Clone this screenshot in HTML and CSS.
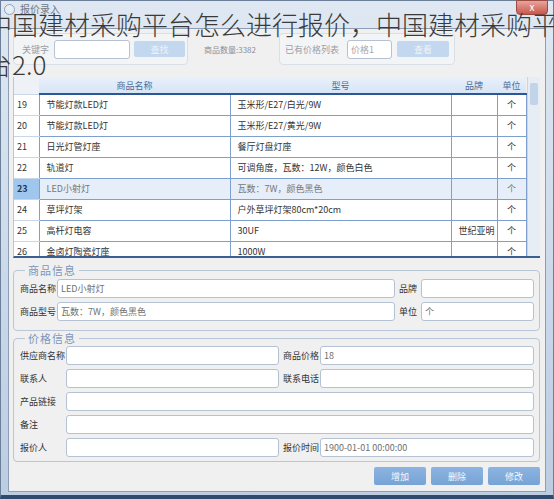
FILE: index.html
```html
<!DOCTYPE html>
<html lang="zh-CN">
<head>
  <meta charset="UTF-8" />
  <meta name="viewport" content="width=device-width, initial-scale=1.0"/>
  <title>中国建材采购平台怎么进行报价</title>
  <link rel="stylesheet" href="styles.css">
</head>
<body>
  <div class="window">
    <div class="titlebar">
      <span class="app-icon"></span>
      <span class="title">报价录入</span>
      <span class="close-btn">x</span>
    </div>

    <div class="client">
      <div class="toolbar">
        <div class="tool-box search-box">
          <span class="tool-label">关键字</span>
          <input type="text" class="field kw-input" />
          <button class="flat-btn find-btn">查找</button>
        </div>
        <span class="count">商品数量:3382</span>
        <div class="tool-box price-box">
          <span class="tool-label">已有价格列表</span>
          <input type="text" class="field price-input" placeholder="价格1" />
          <button class="flat-btn view-btn">查看</button>
        </div>
      </div>

      <div class="grid-wrap">
        <table class="grid">
          <thead>
            <tr>
              <th class="rh"></th>
              <th class="c-name">商品名称</th>
              <th class="c-model">型号</th>
              <th class="c-brand">品牌</th>
              <th class="c-unit">单位</th>
            </tr>
          </thead>
          <tbody>
            <tr><td class="rh">19</td><td>节能灯款LED灯</td><td>玉米形/E27/白光/9W</td><td></td><td class="u">个</td></tr>
            <tr><td class="rh">20</td><td>节能灯款LED灯</td><td>玉米形/E27/黄光/9W</td><td></td><td class="u">个</td></tr>
            <tr><td class="rh">21</td><td>日光灯管灯座</td><td>餐厅灯盘灯座</td><td></td><td class="u">个</td></tr>
            <tr><td class="rh">22</td><td>轨道灯</td><td>可调角度，瓦数：12W，颜色白色</td><td></td><td class="u">个</td></tr>
            <tr class="selected"><td class="rh">23</td><td>LED小射灯</td><td>瓦数：7W，颜色黑色</td><td></td><td class="u">个</td></tr>
            <tr><td class="rh">24</td><td>草坪灯架</td><td>户外草坪灯架80cm*20cm</td><td></td><td class="u">个</td></tr>
            <tr><td class="rh">25</td><td>高杆灯电容</td><td>30UF</td><td>世纪亚明</td><td class="u">个</td></tr>
            <tr><td class="rh">26</td><td>金卤灯陶瓷灯座</td><td>1000W</td><td></td><td class="u">个</td></tr>
          </tbody>
        </table>
        <div class="scrollbar"><div class="thumb"></div></div>
      </div>

      <fieldset class="group goods-group">
        <legend>商品信息</legend>
        <label class="lbl">商品名称</label>
        <input type="text" class="field" value="LED小射灯" />
        <label class="lbl lbl-r">品牌</label>
        <input type="text" class="field" />
        <label class="lbl">商品型号</label>
        <input type="text" class="field" value="瓦数：7W，颜色黑色" />
        <label class="lbl lbl-r">单位</label>
        <input type="text" class="field" value="个" />
      </fieldset>

      <fieldset class="group price-group">
        <legend>价格信息</legend>
        <label class="lbl">供应商名称</label>
        <input type="text" class="field" />
        <label class="lbl lbl-r">商品价格</label>
        <input type="text" class="field" value="18" />
        <label class="lbl">联系人</label>
        <input type="text" class="field" />
        <label class="lbl lbl-r">联系电话</label>
        <input type="text" class="field" />
        <label class="lbl">产品链接</label>
        <input type="text" class="field wide" />
        <label class="lbl">备注</label>
        <input type="text" class="field wide" />
        <label class="lbl">报价人</label>
        <input type="text" class="field" />
        <label class="lbl lbl-r">报价时间</label>
        <input type="text" class="field" value="1900-01-01 00:00:00" />
      </fieldset>

      <div class="actions">
        <button class="act-btn">增加</button>
        <button class="act-btn">删除</button>
        <button class="act-btn">修改</button>
      </div>
    </div>
  </div>

  <h1 class="headline">中国建材采购平台怎么进行报价，中国建材采购平台2.0</h1>
</body>
</html>
```

FILE: styles.css
```css
* {
  box-sizing: border-box;
}

body {
  margin: 0;
  width: 554px;
  height: 499px;
  overflow: hidden;
  position: relative;
  font-family: "Noto Sans CJK SC", "Liberation Sans", sans-serif;
  background: #fff;
}

/* overlaid page heading */
.headline {
  position: absolute;
  left: -14px;
  top: 4px;
  width: 584px;
  margin: 0;
  font-size: 26px;
  line-height: 40px;
  font-weight: 300;
  color: #3a3a3a;
}

.window {
  width: 554px;
  height: 499px;
  display: flex;
  flex-direction: column;
  background: linear-gradient(to bottom, #dfe8f2, #c9d8ea 60%, #bccde2);
  border: 1px solid #6b7f99;
  border-bottom: 4px solid #2f4a6e;
  padding: 0 7px 3px 7px;
}

.titlebar {
  height: 27px;
  display: flex;
  align-items: flex-start;
  padding-top: 2px;
  font-size: 10px;
  color: #6b7888;
}

.app-icon {
  width: 11px;
  height: 11px;
  margin: 1px 5px 0 -4px;
  border-radius: 50%;
  border: 1px solid #8fa3bb;
  background: #e9eef4;
}

.title {
  line-height: 12px;
}

.close-btn {
  margin-left: auto;
  margin-right: -2px;
  margin-top: -3px;
  width: 32px;
  height: 15px;
  border-radius: 0 0 4px 4px;
  background: linear-gradient(to bottom, #e7a59c, #c8584b);
  border: 1px solid #9b4a44;
  color: #fff;
  font-size: 10px;
  line-height: 11px;
  text-align: center;
}

.client {
  flex: 1;
  background: #f0f0f0;
  border: 1px solid #8d9db3;
  padding: 4px 5px 0 4px;
  display: flex;
  flex-direction: column;
}

/* top bar */
.toolbar {
  height: 32px;
  display: flex;
  align-items: center;
}

.tool-box {
  flex-shrink: 0;
  height: 32px;
  display: flex;
  align-items: center;
  border: 1px solid #d9dfe6;
  border-radius: 4px;
  background: #f3f4f6;
}

.search-box {
  width: 175px;
  padding-left: 8px;
}

.price-box {
  width: 176px;
  margin-left: auto;
  margin-right: 85px;
  padding-left: 5px;
}

.tool-label {
  font-size: 9px;
  color: #9a9fa6;
  white-space: nowrap;
  flex-shrink: 0;
}

.count {
  margin-left: 16px;
  font-size: 8px;
  color: #8a8f96;
  white-space: nowrap;
}

.field {
  min-width: 0;
  height: 19px;
  border: 1px solid #b4c2d4;
  border-radius: 3px;
  background: #fff;
  font-family: "Noto Sans CJK SC", sans-serif;
  font-size: 9px;
  color: #707070;
  padding: 0 3px;
  outline: none;
}

.field::placeholder {
  color: #a5a5a5;
}

.kw-input {
  flex-shrink: 0;
  width: 76px;
  margin-left: 5px;
}

.price-input {
  flex-shrink: 0;
  width: 45px;
  margin-left: 8px;
}

.flat-btn {
  flex-shrink: 0;
  height: 16px;
  width: 51px;
  margin-left: 4px;
  border: none;
  border-radius: 2px;
  background: #c3d7ee;
  color: #eef4fb;
  font-family: "Noto Sans CJK SC", sans-serif;
  font-size: 9px;
  padding: 0;
}

.view-btn {
  width: 52px;
  margin-left: 5px;
}

/* data grid */
.grid-wrap {
  margin-top: 12px;
  height: 181px;
  display: flex;
  overflow: hidden;
  border-left: 1px solid #b9c7d8;
  border-bottom: 2px solid #3c5f92;
}

.grid {
  width: 512px;
  border-collapse: collapse;
  table-layout: fixed;
  font-size: 9px;
  color: #333;
}

.grid th {
  height: 17px;
  background: linear-gradient(to bottom, #e9f1fb, #d7e5f6);
  color: #4a6b96;
  font-weight: normal;
  border-bottom: 2px solid #2b5797;
  padding: 0;
}

.grid th.rh {
  width: 25px;
  background: #eef1f5;
  border-bottom: none;
}

.c-name { width: 191px; }
.c-model { width: 221px; }
.c-brand { width: 46px; }
.c-unit { width: 29px; }

.grid td {
  height: 21px;
  border: 1px solid #7f9fce;
  background: #fff;
  padding: 0 0 0 7px;
  white-space: nowrap;
  overflow: hidden;
}

.grid td.rh {
  background: #fff;
  border-left: none;
  padding-left: 3px;
  border-color: #c8d6e8;
  border-right-color: #7f9fce;
}

.grid td.u {
  text-align: center;
  padding: 0;
}

.grid tr.selected td {
  background: #e6eefa;
  color: #777;
}

.grid tr.selected td.rh {
  background: #9fc6ec;
  color: #1d3557;
  font-weight: bold;
}

.scrollbar {
  width: 15px;
  background: #e7edf5;
  border-left: 1px solid #c9d5e4;
  padding: 6px 2px 0 2px;
}

.thumb {
  height: 22px;
  background: #c2d4ea;
  border-radius: 2px;
}

/* form groups */
.group {
  margin: 5px 0 0 0;
  padding: 2px 5px 9px 6px;
  border: 1px solid #b8c6d8;
  border-radius: 4px;
  display: grid;
  row-gap: 4px;
  align-items: center;
}

.group legend {
  font-size: 11px;
  line-height: 14px;
  color: #7b96bb;
  padding: 0 3px;
  margin-left: 5px;
  letter-spacing: 1px;
}

.goods-group {
  grid-template-columns: 37px 338px 26px 113px;
}

.price-group {
  margin-top: 0;
  padding-top: 1px;
  padding-bottom: 4px;
  grid-template-columns: 46px 213px 41px 214px;
}

.lbl {
  font-size: 9px;
  color: #333;
  white-space: nowrap;
}

.lbl-r {
  padding-left: 4px;
}

.wide {
  grid-column: 2 / 5;
}

/* bottom buttons */
.actions {
  display: flex;
  justify-content: flex-end;
  gap: 5px;
  margin-top: 5px;
}

.act-btn {
  width: 52px;
  height: 18px;
  border: none;
  border-radius: 2px;
  background: linear-gradient(to bottom, #8db4e0, #76a3d6);
  color: #f4f8fd;
  font-family: "Noto Sans CJK SC", sans-serif;
  font-size: 9px;
  padding: 0;
}
```
